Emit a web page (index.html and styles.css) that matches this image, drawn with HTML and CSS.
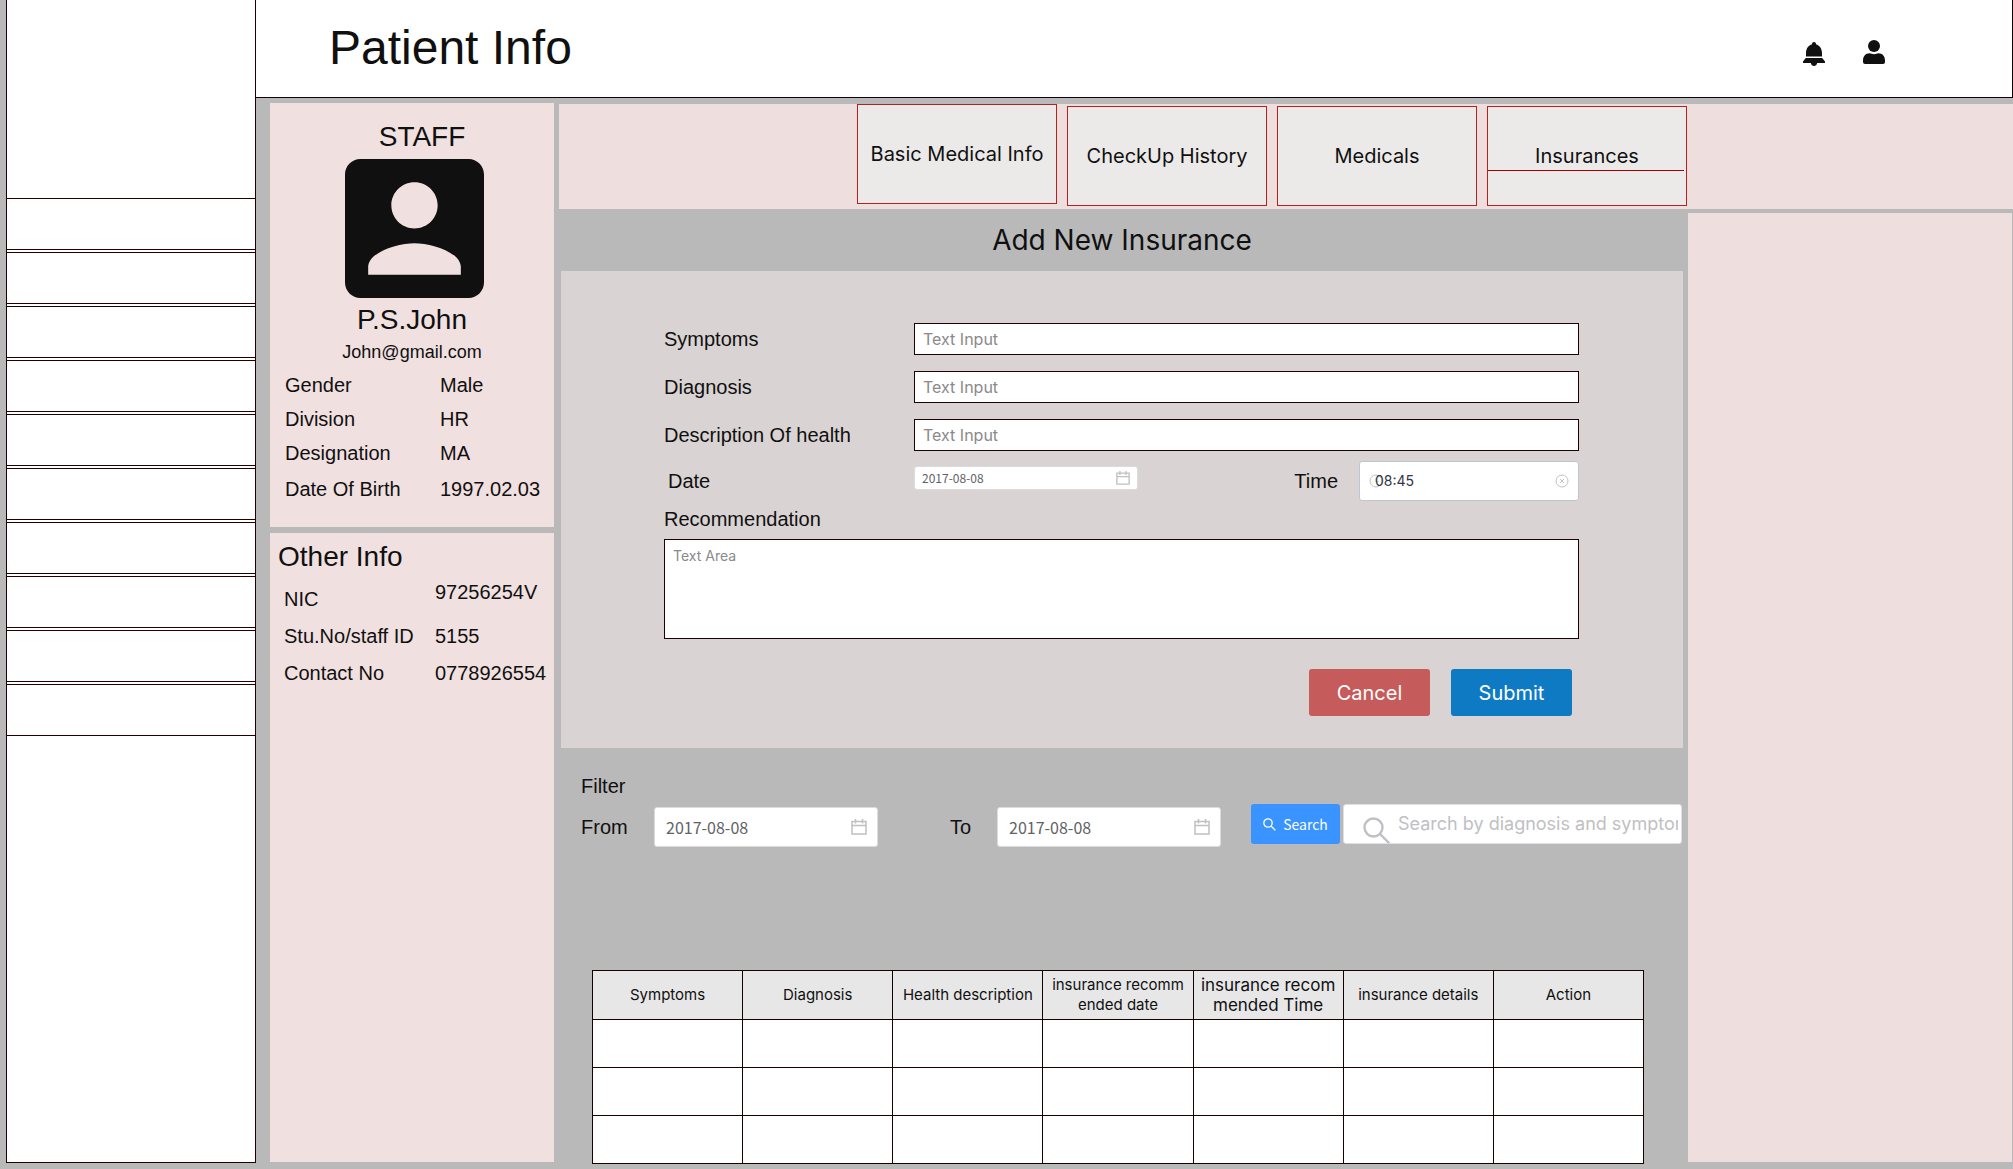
FILE: index.html
```html
<!DOCTYPE html>
<html lang="en">
<head>
<meta charset="utf-8">
<meta name="viewport" content="width=device-width, initial-scale=1">
<title>Patient Info</title>
<link rel="stylesheet" href="styles.css">
</head>
<body>
<div class="page">
  <nav class="sidebar" aria-label="Main">
    <ul class="side-menu">
      <li></li><li></li><li></li><li></li><li></li>
      <li></li><li></li><li></li><li></li><li></li>
    </ul>
  </nav>

  <div class="content">
    <header class="topbar">
      <h1>Patient Info</h1>
      <div class="top-actions">
        <button type="button" class="icon-button bell" aria-label="Notifications">
          <svg width="22" height="24" viewBox="0 0 22 24"><path d="M3 14.500V11C3 6.500 5.600 3.300 9 2.200C9 .900 9.800 0 11 0S13 .900 13 2.200C16.400 3.300 19 6.500 19 11V14.500ZM2.800 15.900H19.200L22 19.600V21H14.200C13.800 22.900 12.600 24 11 24S8.200 22.900 7.800 21H0V19.600Z"/></svg>
        </button>
        <button type="button" class="icon-button" aria-label="Account">
          <svg width="22" height="24" viewBox="0 0 22 24"><circle cx="11" cy="6" r="6"/><path d="M0 20.500C0 16 2.800 13.200 6.500 13.200C8 13.200 9 14.200 11 14.200S14 13.200 15.500 13.200C19.200 13.200 22 16 22 20.500V22Q22 24 20 24H2Q0 24 0 22Z"/></svg>
        </button>
      </div>
    </header>

    <div class="workspace">
      <aside class="profile">
        <section class="card staff-card">
          <h2>STAFF</h2>
          <svg class="avatar" width="139" height="139" viewBox="3 3 18 18" role="img" aria-label="Profile picture"><path d="M3 5v14c0 1.100.890 2 2 2h14c1.100 0 2-.900 2-2V5c0-1.100-.900-2-2-2H5c-1.110 0-2 .900-2 2zm12 4c0 1.660-1.340 3-3 3s-3-1.340-3-3 1.340-3 3-3 3 1.340 3 3zm-9 8c0-2 4-3.100 6-3.100s6 1.100 6 3.100v1H6v-1z"/></svg>
          <p class="name">P.S.John</p>
          <p class="email">John@gmail.com</p>
          <dl class="facts">
            <dt>Gender</dt><dd>Male</dd>
            <dt>Division</dt><dd>HR</dd>
            <dt>Designation</dt><dd>MA</dd>
            <dt>Date Of Birth</dt><dd>1997.02.03</dd>
          </dl>
        </section>
        <section class="card other-card">
          <h2>Other Info</h2>
          <dl class="facts other-facts">
            <dt>NIC</dt><dd class="high">97256254V</dd>
            <dt>Stu.No/staff ID</dt><dd>5155</dd>
            <dt>Contact No</dt><dd>0778926554</dd>
          </dl>
        </section>
      </aside>

      <div class="board">
        <nav class="tabs" aria-label="Sections">
          <a class="tab raised" href="#basic">Basic Medical Info</a>
          <a class="tab" href="#checkup">CheckUp History</a>
          <a class="tab" href="#medicals">Medicals</a>
          <a class="tab current" href="#insurances" aria-current="page">Insurances</a>
        </nav>

        <div class="columns">
          <main class="main">
            <h2 class="section-title">Add New Insurance</h2>
            <form class="insurance-form">
              <div class="fields">
                <label for="symptoms">Symptoms</label>
                <input class="box" id="symptoms" type="text" placeholder="Text Input">
                <label for="diagnosis">Diagnosis</label>
                <input class="box" id="diagnosis" type="text" placeholder="Text Input">
                <label for="description">Description Of health</label>
                <input class="box" id="description" type="text" placeholder="Text Input">
              </div>
              <div class="when">
                <label class="date-label" for="date">Date</label>
                <div class="picker small">
                  <input id="date" type="text" value="2017-08-08">
                  <svg class="calendar" width="14" height="14" viewBox="0 0 16 16"><path d="M1 2.500H15V15H1ZM1 6.500H15M4.500 0V4.500M11.500 0V4.500"/></svg>
                </div>
                <label class="time-label" for="time">Time</label>
                <div class="time-picker">
                  <svg class="clock" width="14" height="14" viewBox="0 0 14 14"><circle cx="7" cy="7" r="6"/><path d="M7 4V7.500H9.500"/></svg>
                  <input id="time" type="text" value="08:45">
                  <svg class="clear" width="14" height="14" viewBox="0 0 14 14"><circle cx="7" cy="7" r="6"/><path d="M5 5L9 9M9 5L5 9"/></svg>
                </div>
              </div>
              <label class="recommend-label" for="recommendation">Recommendation</label>
              <textarea class="box area" id="recommendation" placeholder="Text Area"></textarea>
              <div class="form-actions">
                <button type="button" class="action cancel">Cancel</button>
                <button type="submit" class="action submit">Submit</button>
              </div>
            </form>

            <section class="filter">
              <h3>Filter</h3>
              <div class="filter-row">
                <label class="from-label" for="from">From</label>
                <div class="picker">
                  <input id="from" type="text" value="2017-08-08">
                  <svg class="calendar" width="16" height="16" viewBox="0 0 16 16"><path d="M1 2.500H15V15H1ZM1 6.500H15M4.500 0V4.500M11.500 0V4.500"/></svg>
                </div>
                <label class="to-label" for="to">To</label>
                <div class="picker">
                  <input id="to" type="text" value="2017-08-08">
                  <svg class="calendar" width="16" height="16" viewBox="0 0 16 16"><path d="M1 2.500H15V15H1ZM1 6.500H15M4.500 0V4.500M11.500 0V4.500"/></svg>
                </div>
                <div class="search">
                  <button type="button" class="search-button">
                    <svg width="13" height="13" viewBox="0 0 13 13"><circle cx="5" cy="5" r="4.200"/><path d="M8 8L12.400 12.400"/></svg>
                    Search
                  </button>
                  <div class="search-field">
                    <svg width="27" height="26" viewBox="0 0 27 26"><circle cx="10.500" cy="10.500" r="9"/><path d="M17 17L27 27"/></svg>
                    <input type="text" aria-label="Search by diagnosis and symptoms" placeholder="Search by diagnosis and symptoms">
                  </div>
                </div>
              </div>
            </section>

            <table class="records">
              <thead>
                <tr>
                  <th scope="col">Symptoms</th>
                  <th scope="col">Diagnosis</th>
                  <th scope="col">Health description</th>
                  <th scope="col">insurance recomm<br>ended date</th>
                  <th scope="col" class="large">insurance recom<br>mended Time</th>
                  <th scope="col">insurance details</th>
                  <th scope="col">Action</th>
                </tr>
              </thead>
              <tbody>
                <tr><td></td><td></td><td></td><td></td><td></td><td></td><td></td></tr>
                <tr><td></td><td></td><td></td><td></td><td></td><td></td><td></td></tr>
                <tr><td></td><td></td><td></td><td></td><td></td><td></td><td></td></tr>
              </tbody>
            </table>
          </main>
          <aside class="side-panel"></aside>
        </div>
      </div>
    </div>
  </div>
</div>
</body>
</html>
```
FILE: styles.css
```css
* {
  box-sizing: border-box;
}

body {
  margin: 0;
  background: #b9b9b9;
  color: #101010;
  font: 20px/24px "Liberation Sans", Arial, sans-serif;
}

h1, h2, h3, p, dl, dd, ul {
  margin: 0;
  padding: 0;
  font-weight: 400;
}

input, textarea, button {
  margin: 0;
  font: inherit;
  color: inherit;
}

.page {
  display: flex;
  min-height: 100vh;
  padding-left: 6px;
}

/* Left navigation */
.sidebar {
  flex: 0 0 250px;
  margin-bottom: 6px;
  padding-top: 198px;
  background: #fff;
  border: 1px solid #200000;
  border-top: 0;
}

.side-menu {
  display: flex;
  flex-direction: column;
  gap: 2px;
  list-style: none;
}

.side-menu li {
  height: 52px;
  border: solid #200000;
  border-width: 1px 0;
}

.content {
  flex: 1;
  min-width: 0;
  display: flex;
  flex-direction: column;
}

/* Header */
.topbar {
  display: flex;
  align-items: center;
  justify-content: space-between;
  height: 98px;
  padding: 0 127px 2px 73px;
  background: #fff;
  border: solid #160008;
  border-width: 0 1px 1px 0;
}

h1 {
  font-size: 48px;
  line-height: 56px;
}

.top-actions {
  display: flex;
  align-items: flex-start;
  gap: 38px;
  padding-top: 10px;
}

.icon-button {
  display: block;
  padding: 0;
  border: 0;
  background: none;
  line-height: 0;
}

.bell {
  padding-top: 2px;
}

.icon-button svg {
  display: block;
  fill: #101010;
}

/* Body */
.workspace {
  flex: 1;
  display: flex;
  gap: 5px;
  padding: 5px 0 5px 14px;
}

.profile {
  flex: 0 0 284px;
  display: flex;
  flex-direction: column;
  gap: 6px;
  margin-bottom: 2px;
}

.card {
  background: #f0e0e0;
}

.card h2,
.name {
  font-size: 28px;
  line-height: 32px;
}

.staff-card {
  height: 424px;
  padding-top: 18px;
}

.staff-card h2 {
  padding-left: 20px;
  text-align: center;
}

.avatar {
  display: block;
  margin: 6px 0 6px 75px;
  fill: #101010;
}

.name,
.email {
  text-align: center;
}

.email {
  font-size: 18px;
  line-height: 32px;
}

.facts {
  display: grid;
  grid-template-columns: 155px 1fr;
  grid-template-rows: repeat(3, 34px) 38px;
  align-items: center;
  padding: 0 0 0 15px;
  white-space: nowrap;
}

.other-card {
  flex: 1;
  padding-top: 8px;
}

.other-card h2 {
  padding-left: 8px;
}

.other-facts {
  grid-template-columns: 151px 1fr;
  grid-template-rows: repeat(3, 37px);
  padding: 7px 0 0 14px;
}

.high {
  align-self: start;
}

.board {
  flex: 1;
  min-width: 0;
  display: flex;
  flex-direction: column;
  padding-top: 1px;
}

.tabs {
  display: flex;
  justify-content: flex-end;
  align-items: flex-end;
  gap: 10px;
  height: 105px;
  padding: 0 326px 3px 0;
  background: #eedede;
}

.tab {
  position: relative;
  display: flex;
  align-items: center;
  justify-content: center;
  width: 200px;
  height: 100px;
  background: #ebeae9;
  border: 1px solid #b82020;
  color: #101010;
  font-family: Inter, sans-serif;
  text-decoration: none;
}

.raised {
  align-self: flex-start;
}

.current::after {
  content: "";
  position: absolute;
  left: 0;
  right: 2px;
  bottom: 34px;
  border-bottom: 1px solid #a80000;
}

.columns {
  flex: 1;
  display: flex;
  padding-right: 1px;
}

.main {
  flex: 1;
  min-width: 0;
  padding: 0 5px 0 2px;
}

.side-panel {
  flex: 0 0 324px;
  margin: 4px 0 2px;
  background: #eedede;
}

.section-title {
  font: 28px/62px Inter, sans-serif;
  text-align: center;
}

/* Form */
.insurance-form {
  height: 477px;
  padding: 52px 104px 0 103px;
  background: #d9d4d3;
}

.fields {
  display: grid;
  grid-template-columns: 250px 1fr;
  grid-auto-rows: 32px;
  gap: 16px 0;
  align-items: center;
}

.box {
  display: block;
  width: 100%;
  height: 32px;
  padding: 0 8px;
  background: #fff;
  border: 1px solid #200000;
  border-radius: 0;
  outline: 0;
  font: 16px/20px Inter, sans-serif;
}

.box::placeholder {
  color: #8a8a8a;
  opacity: 1;
}

.area {
  height: 100px;
  margin-top: 8px;
  padding: 6px 8px;
  font-size: 14px;
  resize: none;
}

.when {
  display: flex;
  align-items: center;
  height: 40px;
  margin-top: 10px;
}

.date-label {
  width: 250px;
  padding-left: 4px;
}

.picker {
  display: flex;
  align-items: center;
  width: 224px;
  height: 40px;
  padding: 0 10px 0 11px;
  background: #fff;
  border: 1px solid #dcdcdc;
  border-radius: 3px;
}

.picker input {
  flex: 1;
  min-width: 0;
  padding: 0;
  border: 0;
  outline: 0;
  background: none;
  color: #606266;
  font: 16px/20px "Noto Sans CJK SC", sans-serif;
}

.calendar {
  fill: none;
  stroke: #c0c0c0;
  stroke-width: 1.500;
}

.small {
  height: 24px;
  margin-bottom: 6px;
  padding: 0 7px;
}

.small input {
  font-size: 12px;
}

.time-label {
  margin: 0 21px 0 auto;
}

.time-picker {
  display: flex;
  align-items: center;
  width: 220px;
  height: 40px;
  padding: 0 9px;
  background: #fff;
  border: 1px solid #c0c4cc;
  border-radius: 3px;
}

.time-picker svg {
  fill: none;
  stroke: #c0c2c6;
  flex: none;
}

/* The clock sits partly behind the first digit. */
.clock {
  margin-right: -8px;
}

.time-picker input {
  position: relative;
  flex: 1;
  min-width: 0;
  padding: 0;
  border: 0;
  outline: 0;
  background: none;
  color: #303643;
  font: 14px/20px Inter, sans-serif;
}

.recommend-label {
  display: block;
  margin-top: 6px;
}

.form-actions {
  display: flex;
  justify-content: flex-end;
  gap: 21px;
  padding: 30px 7px 0 0;
}

.action {
  width: 121px;
  height: 47px;
  padding: 0;
  border: 0;
  border-radius: 3px;
  color: #fff;
  font: 20px/24px Inter, sans-serif;
}

.cancel {
  background: #c55b5b;
}

.submit {
  background: #0f7ac4;
}

/* Filter */
.filter {
  padding: 26px 1px 0 20px;
}

.filter h3 {
  font-size: 20px;
}

.filter-row {
  display: flex;
  align-items: center;
  height: 42px;
  margin-top: 8px;
}

.from-label {
  width: 73px;
}

.to-label {
  width: 47px;
  margin-left: 72px;
}

.search {
  display: flex;
  gap: 3px;
  margin-left: auto;
  padding-bottom: 6px;
}

.search-button {
  display: flex;
  align-items: center;
  justify-content: center;
  gap: 7px;
  width: 89px;
  height: 40px;
  padding: 0;
  border: 0;
  border-radius: 3px;
  background: #3994ff;
  color: #fff;
  font: 14px/20px "Noto Sans CJK SC", sans-serif;
}

.search-button svg {
  fill: none;
  stroke: #fff;
  stroke-width: 1.300;
}

.search-field {
  display: flex;
  align-items: center;
  gap: 8px;
  width: 339px;
  height: 40px;
  padding: 0 3px 0 19px;
  background: #fff;
  border: 1px solid #dcdfe6;
  border-radius: 3px;
}

.search-field svg {
  flex: none;
  align-self: flex-end;
  fill: none;
  stroke: #c0c0c4;
  stroke-width: 2.400;
}

.search-field input {
  flex: 1;
  min-width: 0;
  padding: 0;
  border: 0;
  outline: 0;
  background: none;
  font: 18px/24px Inter, sans-serif;
}

.search-field input::placeholder {
  color: #c0c0c4;
  opacity: 1;
}

/* Records */
.records {
  width: calc(100% - 70px);
  margin: 122px 39px 0 31px;
  border-collapse: collapse;
  table-layout: fixed;
  background: #fff;
  font: 15px/20px Inter, sans-serif;
}

.records th,
.records td {
  height: 48px;
  padding: 0;
  border: 1px solid #160000;
}

.records th {
  height: 49px;
  background: #e7e7e7;
  font-weight: 400;
  white-space: nowrap;
}

.records .large {
  font-size: 17px;
}
```
